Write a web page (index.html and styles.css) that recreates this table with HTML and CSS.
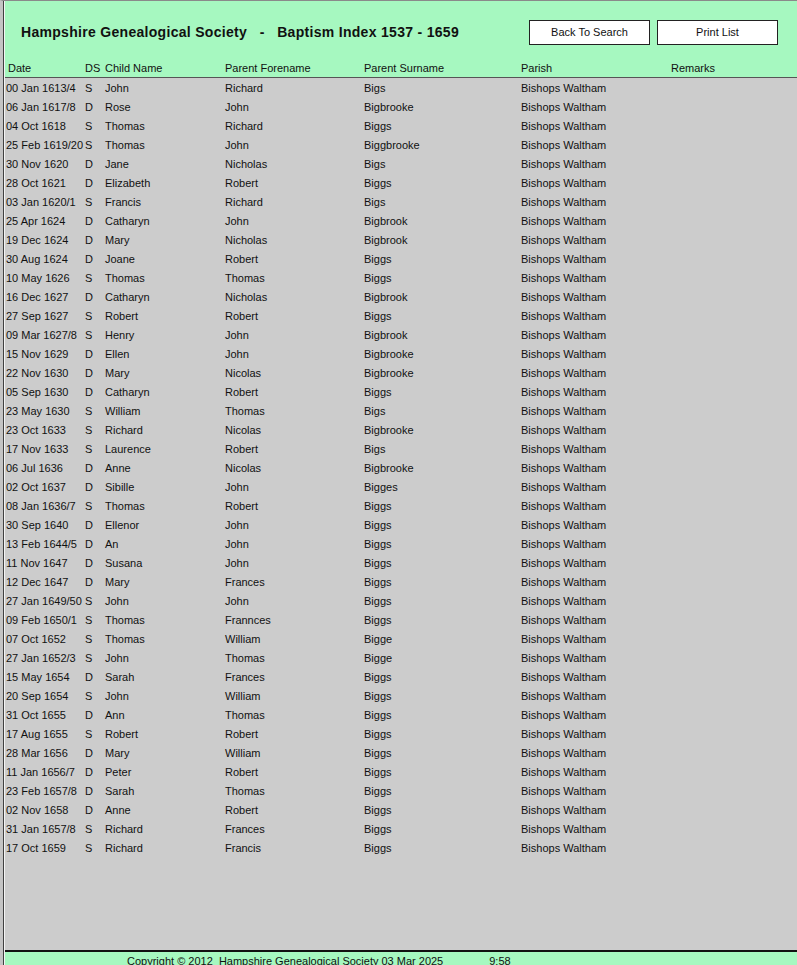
FILE: index.html
```html
<!DOCTYPE html>
<html lang="en">
  <head>
    <meta charset="UTF-8" />
    <title>Baptism Index</title>
    <link rel="stylesheet" href="styles.css">
  </head>
  <body>
    <div class="frame">
      <div class="page">
        <div class="header">
          <div class="top">
            <h1 class="title">Hampshire Genealogical Society   -   Baptism Index 1537 - 1659</h1>
            <div class="buttons">
              <button class="btn">Back To Search</button>
              <button class="btn">Print List</button>
            </div>
          </div>
          <div class="row heads">
            <span class="date">Date</span>
            <span>DS</span>
            <span>Child Name</span>
            <span>Parent Forename</span>
            <span>Parent Surname</span>
            <span>Parish</span>
            <span>Remarks</span>
          </div>
        </div>

        <div class="list">
          <div class="row sel"><span>00 Jan 1613/4</span><span>S</span><span>John</span><span>Richard</span><span>Bigs</span><span>Bishops Waltham</span><span></span></div>
          <div class="row"><span>06 Jan 1617/8</span><span>D</span><span>Rose</span><span>John</span><span>Bigbrooke</span><span>Bishops Waltham</span><span></span></div>
          <div class="row"><span>04 Oct 1618</span><span>S</span><span>Thomas</span><span>Richard</span><span>Biggs</span><span>Bishops Waltham</span><span></span></div>
          <div class="row"><span>25 Feb 1619/20</span><span>S</span><span>Thomas</span><span>John</span><span>Biggbrooke</span><span>Bishops Waltham</span><span></span></div>
          <div class="row"><span>30 Nov 1620</span><span>D</span><span>Jane</span><span>Nicholas</span><span>Bigs</span><span>Bishops Waltham</span><span></span></div>
          <div class="row"><span>28 Oct 1621</span><span>D</span><span>Elizabeth</span><span>Robert</span><span>Biggs</span><span>Bishops Waltham</span><span></span></div>
          <div class="row"><span>03 Jan 1620/1</span><span>S</span><span>Francis</span><span>Richard</span><span>Bigs</span><span>Bishops Waltham</span><span></span></div>
          <div class="row"><span>25 Apr 1624</span><span>D</span><span>Catharyn</span><span>John</span><span>Bigbrook</span><span>Bishops Waltham</span><span></span></div>
          <div class="row"><span>19 Dec 1624</span><span>D</span><span>Mary</span><span>Nicholas</span><span>Bigbrook</span><span>Bishops Waltham</span><span></span></div>
          <div class="row"><span>30 Aug 1624</span><span>D</span><span>Joane</span><span>Robert</span><span>Biggs</span><span>Bishops Waltham</span><span></span></div>
          <div class="row"><span>10 May 1626</span><span>S</span><span>Thomas</span><span>Thomas</span><span>Biggs</span><span>Bishops Waltham</span><span></span></div>
          <div class="row"><span>16 Dec 1627</span><span>D</span><span>Catharyn</span><span>Nicholas</span><span>Bigbrook</span><span>Bishops Waltham</span><span></span></div>
          <div class="row"><span>27 Sep 1627</span><span>S</span><span>Robert</span><span>Robert</span><span>Biggs</span><span>Bishops Waltham</span><span></span></div>
          <div class="row"><span>09 Mar 1627/8</span><span>S</span><span>Henry</span><span>John</span><span>Bigbrook</span><span>Bishops Waltham</span><span></span></div>
          <div class="row"><span>15 Nov 1629</span><span>D</span><span>Ellen</span><span>John</span><span>Bigbrooke</span><span>Bishops Waltham</span><span></span></div>
          <div class="row"><span>22 Nov 1630</span><span>D</span><span>Mary</span><span>Nicolas</span><span>Bigbrooke</span><span>Bishops Waltham</span><span></span></div>
          <div class="row"><span>05 Sep 1630</span><span>D</span><span>Catharyn</span><span>Robert</span><span>Biggs</span><span>Bishops Waltham</span><span></span></div>
          <div class="row"><span>23 May 1630</span><span>S</span><span>William</span><span>Thomas</span><span>Bigs</span><span>Bishops Waltham</span><span></span></div>
          <div class="row"><span>23 Oct 1633</span><span>S</span><span>Richard</span><span>Nicolas</span><span>Bigbrooke</span><span>Bishops Waltham</span><span></span></div>
          <div class="row"><span>17 Nov 1633</span><span>S</span><span>Laurence</span><span>Robert</span><span>Bigs</span><span>Bishops Waltham</span><span></span></div>
          <div class="row"><span>06 Jul 1636</span><span>D</span><span>Anne</span><span>Nicolas</span><span>Bigbrooke</span><span>Bishops Waltham</span><span></span></div>
          <div class="row"><span>02 Oct 1637</span><span>D</span><span>Sibille</span><span>John</span><span>Bigges</span><span>Bishops Waltham</span><span></span></div>
          <div class="row"><span>08 Jan 1636/7</span><span>S</span><span>Thomas</span><span>Robert</span><span>Biggs</span><span>Bishops Waltham</span><span></span></div>
          <div class="row"><span>30 Sep 1640</span><span>D</span><span>Ellenor</span><span>John</span><span>Biggs</span><span>Bishops Waltham</span><span></span></div>
          <div class="row"><span>13 Feb 1644/5</span><span>D</span><span>An</span><span>John</span><span>Biggs</span><span>Bishops Waltham</span><span></span></div>
          <div class="row"><span>11 Nov 1647</span><span>D</span><span>Susana</span><span>John</span><span>Biggs</span><span>Bishops Waltham</span><span></span></div>
          <div class="row"><span>12 Dec 1647</span><span>D</span><span>Mary</span><span>Frances</span><span>Biggs</span><span>Bishops Waltham</span><span></span></div>
          <div class="row"><span>27 Jan 1649/50</span><span>S</span><span>John</span><span>John</span><span>Biggs</span><span>Bishops Waltham</span><span></span></div>
          <div class="row"><span>09 Feb 1650/1</span><span>S</span><span>Thomas</span><span>Frannces</span><span>Biggs</span><span>Bishops Waltham</span><span></span></div>
          <div class="row"><span>07 Oct 1652</span><span>S</span><span>Thomas</span><span>William</span><span>Bigge</span><span>Bishops Waltham</span><span></span></div>
          <div class="row"><span>27 Jan 1652/3</span><span>S</span><span>John</span><span>Thomas</span><span>Bigge</span><span>Bishops Waltham</span><span></span></div>
          <div class="row"><span>15 May 1654</span><span>D</span><span>Sarah</span><span>Frances</span><span>Biggs</span><span>Bishops Waltham</span><span></span></div>
          <div class="row"><span>20 Sep 1654</span><span>S</span><span>John</span><span>William</span><span>Biggs</span><span>Bishops Waltham</span><span></span></div>
          <div class="row"><span>31 Oct 1655</span><span>D</span><span>Ann</span><span>Thomas</span><span>Biggs</span><span>Bishops Waltham</span><span></span></div>
          <div class="row"><span>17 Aug 1655</span><span>S</span><span>Robert</span><span>Robert</span><span>Biggs</span><span>Bishops Waltham</span><span></span></div>
          <div class="row"><span>28 Mar 1656</span><span>D</span><span>Mary</span><span>William</span><span>Biggs</span><span>Bishops Waltham</span><span></span></div>
          <div class="row"><span>11 Jan 1656/7</span><span>D</span><span>Peter</span><span>Robert</span><span>Biggs</span><span>Bishops Waltham</span><span></span></div>
          <div class="row"><span>23 Feb 1657/8</span><span>D</span><span>Sarah</span><span>Thomas</span><span>Biggs</span><span>Bishops Waltham</span><span></span></div>
          <div class="row"><span>02 Nov 1658</span><span>D</span><span>Anne</span><span>Robert</span><span>Biggs</span><span>Bishops Waltham</span><span></span></div>
          <div class="row"><span>31 Jan 1657/8</span><span>S</span><span>Richard</span><span>Frances</span><span>Biggs</span><span>Bishops Waltham</span><span></span></div>
          <div class="row"><span>17 Oct 1659</span><span>S</span><span>Richard</span><span>Francis</span><span>Biggs</span><span>Bishops Waltham</span><span></span></div>
        </div>

        <div class="footer">
          <span class="copy">Copyright © 2012  Hampshire Genealogical Society</span>
          <span class="stamp">03 Mar 2025</span>
          <span class="time">9:58</span>
        </div>
      </div>
    </div>
  </body>
</html>
```

FILE: styles.css
```css
body {
  margin: 0;
  padding: 0;
  background: #cccccc;
  font-family: "Liberation Sans", Arial, sans-serif;
  font-size: 11px;
  color: #111111;
}
.frame {
  height: 965px;
  border-left: 3px solid #c4c4c4;
  border-top: 1px solid #8a8a8a;
  box-sizing: border-box;
  overflow: hidden;
}
.page {
  height: 100%;
  border-left: 1px solid #404040;
  box-shadow: inset 1px 0 0 #f4f4f4;
  padding-left: 1px;
  display: flex;
  flex-direction: column;
}
.header {
  background: #a6f8c0;
  height: 76px;
  border-bottom: 1px solid #555555;
  display: flex;
  flex-direction: column;
}
.top {
  display: flex;
  align-items: flex-start;
  height: 60px;
}
.title {
  margin: 23px 0 0 16px;
  font-size: 14px;
  font-weight: bold;
  letter-spacing: 0.3px;
  white-space: pre;
  color: #111111;
  flex: 1;
}
.buttons {
  display: flex;
  gap: 7px;
  margin: 19px 19px 0 0;
}
.btn {
  width: 121px;
  height: 25px;
  background: #ffffff;
  border: 1px solid #222222;
  font-family: "Liberation Sans", Arial, sans-serif;
  font-size: 11px;
  color: #111111;
  padding: 0 0 2px;
}
.row {
  display: grid;
  grid-template-columns: 79px 20px 120px 139px 157px 150px 1fr;
  height: 19px;
  line-height: 21px;
  white-space: pre;
}
.row span {
  padding-left: 1px;
}
.heads {
  height: 15px;
  line-height: 14px;
}
.heads .date {
  padding-left: 3px;
}
.list {
  flex: 1;
  position: relative;
}
.sel::before {
  content: "";
  position: absolute;
  left: -6px;
  width: 4px;
  height: 19px;
  background: #111111;
}
.footer {
  background: #a6f8c0;
  border-top: 2px solid #111111;
  height: 13px;
  line-height: 19px;
  display: flex;
  white-space: pre;
}
.copy {
  margin-left: 122px;
}
.stamp {
  margin-left: 3px;
}
.time {
  margin-left: 46px;
}
```
